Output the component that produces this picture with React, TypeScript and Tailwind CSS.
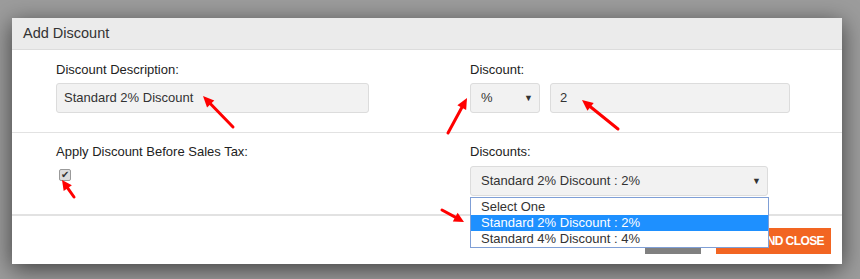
import React from "react";

const arrows: [number, number, number, number, number][] = [
  [233, 127, 203, 96, 11],
  [448, 133, 467, 98, 11],
  [618, 129, 582, 100, 11],
  [74, 197, 62, 180, 10],
  [442, 210, 464, 222, 10],
];

function Arrow({ t }: { t: [number, number, number, number, number] }) {
  const [tx, ty, hx, hy, len] = t;
  const L = Math.hypot(hx - tx, hy - ty);
  const dx = (hx - tx) / L;
  const dy = (hy - ty) / L;
  const bx = hx - dx * len;
  const by = hy - dy * len;
  const px = -dy * 5;
  const py = dx * 5;
  return (
    <g>
      <line x1={tx} y1={ty} x2={bx + dx * 1} y2={by + dy * 1} stroke="#ff0000" strokeWidth={3} strokeLinecap="round" />
      <polygon points={`${hx},${hy} ${bx + px},${by + py} ${bx - px},${by - py}`} fill="#ff0000" />
    </g>
  );
}

function Caret() {
  return <span className="text-[9px] text-[#333] leading-none">▼</span>;
}

export default function App() {
  return (
    <div
      className="relative w-[860px] h-[279px] overflow-hidden bg-[#9c9c9c] pt-[18px] pl-[12px] text-[13px] text-[#222]"
      style={{ fontFamily: '"Liberation Sans", Arial, sans-serif' }}
    >
      <div className="w-[830px] bg-white shadow-[0_5px_22px_rgba(0,0,0,0.6)]">
        <div className="h-[32px] bg-[#ebebeb] border-b border-[#dcdcdc] flex items-center pl-[11px] text-[14.5px] text-[#333]">
          Add Discount
        </div>
        <div className="grid grid-cols-[414px_1fr] pl-[44px] pt-[12px] pb-[19px] border-b border-[#e2e2e2]">
          <div>
            <div className="h-[15px] leading-[15px] mb-[6px]">Discount Description:</div>
            <div className="w-[313px] h-[30px] bg-[#f2f2f2] border border-[#dcdcdc] rounded-[3px] flex items-center pl-[7px] text-[#333]">
              Standard 2% Discount
            </div>
          </div>
          <div>
            <div className="h-[15px] leading-[15px] mb-[6px]">Discount:</div>
            <div className="flex gap-[10px]">
              <div className="w-[70px] h-[30px] bg-[#f2f2f2] border border-[#dcdcdc] rounded-[3px] flex items-center justify-between pl-[10px] pr-[6px] text-[#333]">
                <span>%</span>
                <Caret />
              </div>
              <div className="w-[240px] h-[30px] bg-[#f2f2f2] border border-[#dcdcdc] rounded-[3px] flex items-center pl-[9px] text-[#333]">
                2
              </div>
            </div>
          </div>
        </div>
        <div className="grid grid-cols-[414px_1fr] pl-[44px] pt-[11px] pb-[18px] border-b-2 border-[#e2e2e2]">
          <div>
            <div className="h-[15px] leading-[15px]">Apply Discount Before Sales Tax:</div>
            <div className="mt-[10px] ml-[3px] w-[12px] h-[12px] rounded-[2px] border border-[#9a9a9a] bg-[#dcdcdc] flex items-center justify-center text-[10px] leading-none text-[#333]">
              ✔
            </div>
          </div>
          <div>
            <div className="h-[15px] leading-[15px]">Discounts:</div>
            <div className="relative mt-[7px] w-[298px]">
              <div className="h-[30px] bg-[#f2f2f2] border border-[#dcdcdc] rounded-[3px] flex items-center justify-between pl-[10px] pr-[6px] text-[#333]">
                <span>Standard 2% Discount : 2%</span>
                <Caret />
              </div>
              <div className="absolute z-10 left-0 top-[31px] w-[299px] bg-white border border-[#7f9fd6] text-[13px] text-[#333]">
                <div className="h-[17px] leading-[17px] pl-[10px]">Select One</div>
                <div className="h-[16px] leading-[16px] pl-[10px] bg-[#1e90ff] text-white">Standard 2% Discount : 2%</div>
                <div className="h-[16px] leading-[16px] pl-[10px]">Standard 4% Discount : 4%</div>
              </div>
            </div>
          </div>
        </div>
        <div className="h-[48px] flex justify-end items-start pt-[12px] pr-[11px] gap-[15px]">
          <div className="w-[56px] h-[26px] bg-[#808080] text-white text-[12px] font-bold flex items-center justify-center">
            CANCEL
          </div>
          <div className="w-[115px] h-[26px] bg-[#f26522] text-white text-[12px] font-bold tracking-[-0.6px] flex items-center justify-center pl-[4px]">
            SAVE AND CLOSE
          </div>
        </div>
      </div>
      <svg className="absolute left-0 top-0 pointer-events-none z-20" width={860} height={279}>
        {arrows.map((a, i) => (
          <Arrow key={i} t={a} />
        ))}
      </svg>
    </div>
  );
}
